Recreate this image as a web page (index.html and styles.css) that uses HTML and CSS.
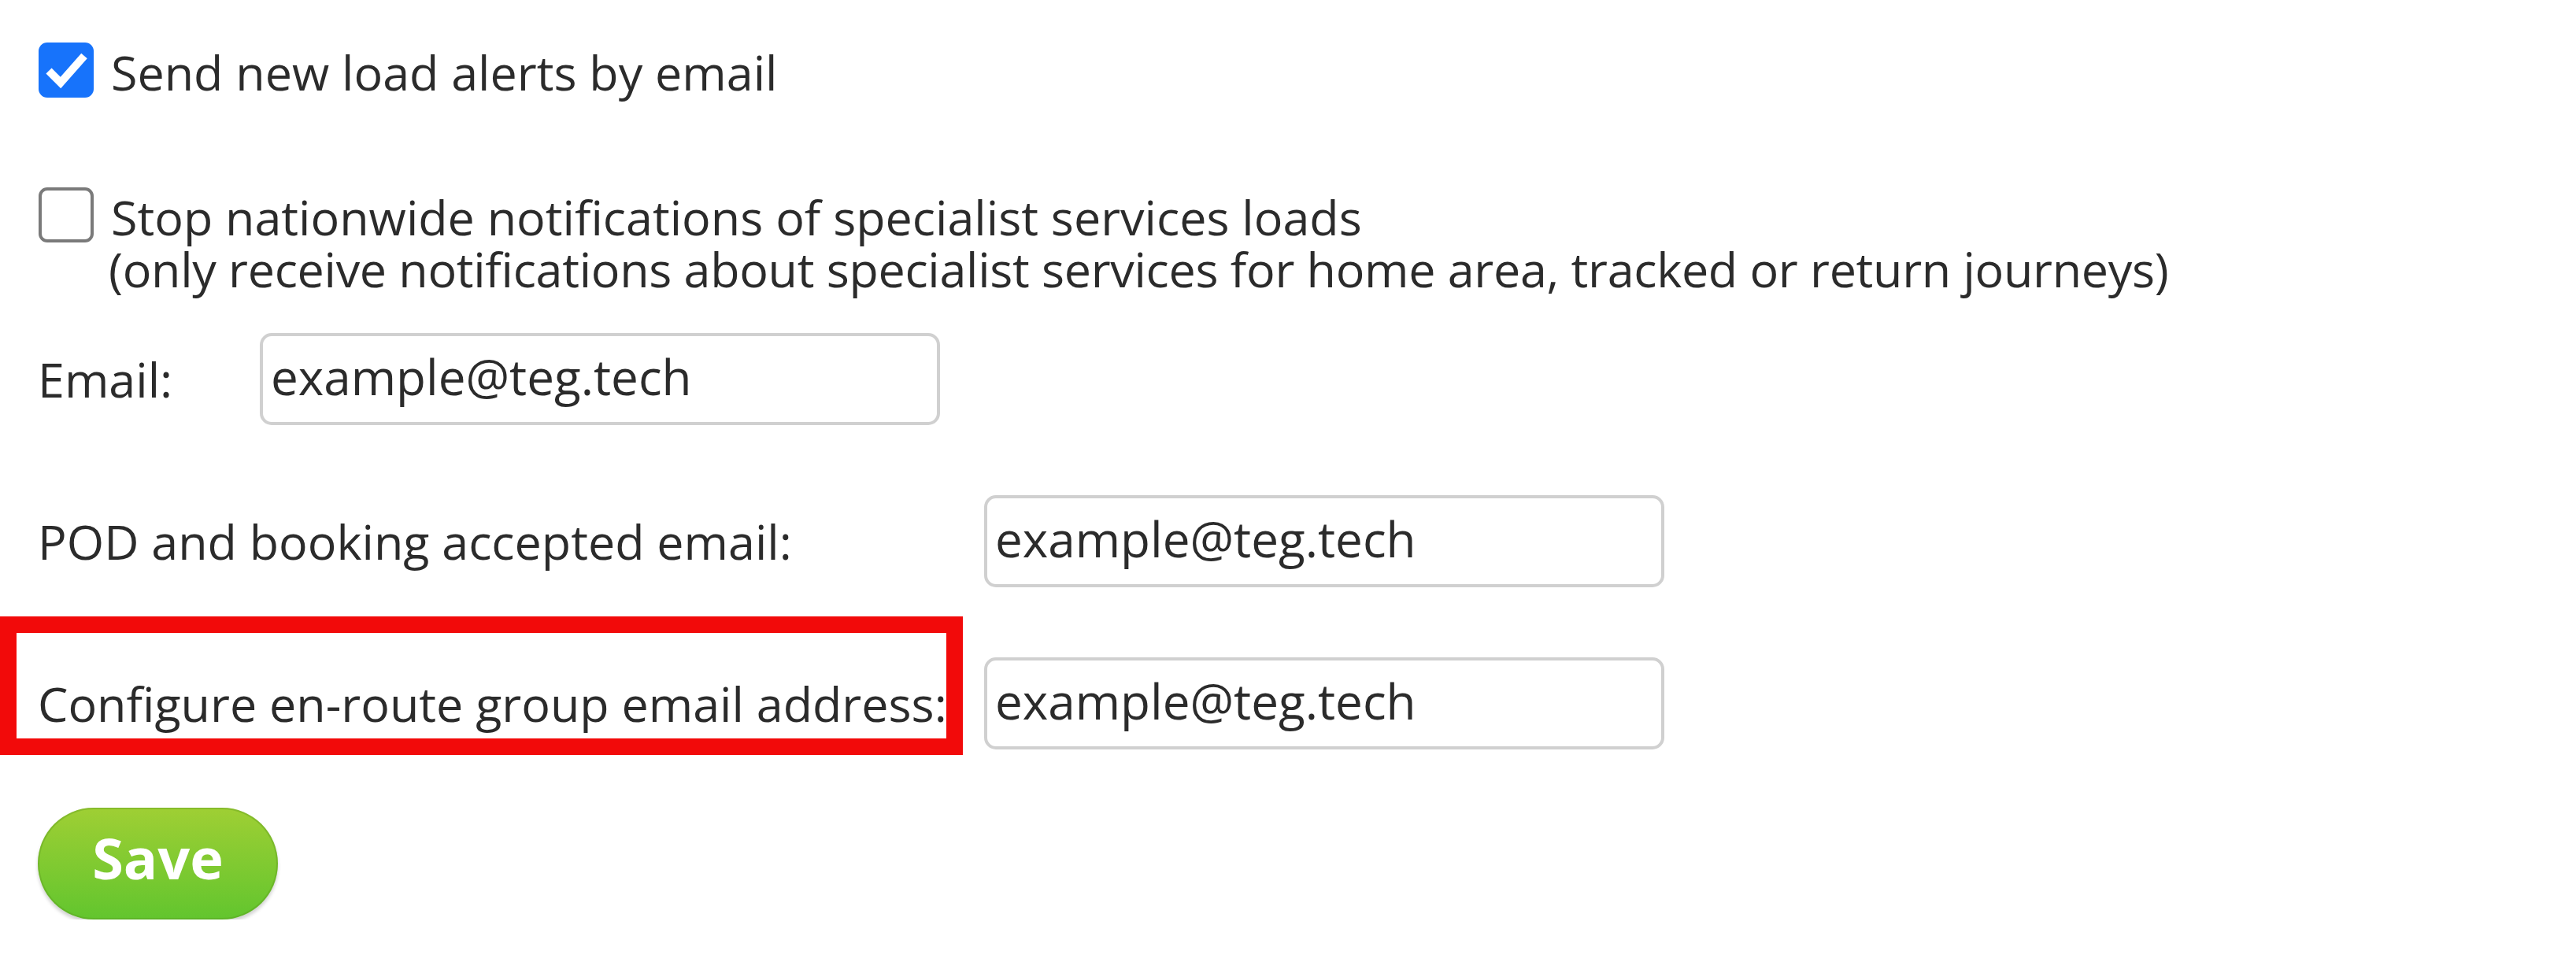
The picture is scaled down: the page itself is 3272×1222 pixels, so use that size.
FILE: index.html
```
<!doctype html>
<html>

<head>
  <meta charset="UTF-8">
  <title>Notification settings</title>
  <link rel="stylesheet" href="styles.css">
</head>

<body>
  <form class="settings">

    <label class="option option-first">
      <span class="box box-checked">
        <svg viewBox="0 0 70 70" width="70" height="70">
          <polyline points="13,36 28,51 58,17" fill="none" stroke="#fff" stroke-width="10" />
        </svg>
      </span>
      <span class="option-text">Send new load alerts by email</span>
    </label>

    <label class="option option-second">
      <span class="box"></span>
      <span class="option-text">
        <span class="option-line">Stop nationwide notifications of specialist services loads</span>
        <span class="option-line option-note">(only receive notifications about specialist services for home
          area, tracked or return journeys)</span>
      </span>
    </label>

    <div class="field">
      <span class="field-label field-label-short">Email:</span>
      <input class="field-input" type="text" value="example@teg.tech">
    </div>

    <div class="field">
      <span class="field-label">POD and booking accepted email:</span>
      <input class="field-input" type="text" value="example@teg.tech">
    </div>

    <div class="field field-last">
      <span class="field-label">Configure en-route group email address:</span>
      <input class="field-input" type="text" value="example@teg.tech">
      <!-- highlight box drawn over the label -->
      <span class="highlight"></span>
    </div>

    <button class="save" type="button">Save</button>

  </form>
</body>

</html>
```
FILE: styles.css
```
body {
  margin: 0;
  padding: 54px 0 0 48px;
  background: #fff;
  color: #2b2b2b;
  font: normal 61px/66px "Open Sans", sans-serif;
}

.settings {
  display: flex;
  flex-direction: column;
  align-items: flex-start;
}

/* checkbox rows */

.option {
  display: flex;
  align-items: flex-start;
  gap: 22px;
}

.option-first {
  margin-bottom: 113px;
}

.option-second {
  margin-bottom: 48px;
}

.option-text {
  margin-top: 5px;
}

.option-line {
  display: block;
  height: 66px;
}

.option-note {
  margin-left: -3px;
  letter-spacing: -0.3px;
}

.box {
  box-sizing: border-box;
  flex: none;
  width: 70px;
  height: 70px;
  margin-left: 1px;
  border: 4px solid #7a7a7a;
  border-radius: 11px;
  background: #fff;
}

.box-checked {
  border: 0;
  background: #1773fb;
}

.box svg {
  display: block;
}

/* email fields */

.field {
  position: relative;
  display: flex;
  align-items: center;
  margin-bottom: 89px;
}

.field-last {
  margin-bottom: 74px;
}

.field-label {
  flex: none;
  width: 1202px;
}

.field-label-short {
  width: 282px;
}

.field-input {
  box-sizing: border-box;
  width: 864px;
  height: 117px;
  margin: 0;
  padding: 0 10px 8px;
  border: 4px solid #d0d0d0;
  border-radius: 15px;
  background: #fff;
  color: #2b2b2b;
  font: normal 62px "Open Sans", sans-serif;
  outline: none;
}

.highlight {
  position: absolute;
  left: -48px;
  top: -52px;
  box-sizing: border-box;
  width: 1223px;
  height: 176px;
  border: 21px solid #f20a0a;
  pointer-events: none;
}

/* save button */

.save {
  display: flex;
  align-items: center;
  justify-content: center;
  width: 305px;
  height: 142px;
  padding: 0 0 16px;
  border: 0;
  border-radius: 71px;
  background: linear-gradient(#9fcf34, #62c52e);
  box-shadow: inset 0 0 0 2px rgba(90, 150, 30, 0.35), 0 4px 4px rgba(0, 0, 0, 0.18);
  color: #fff;
  font: bold 72px/1 "Open Sans", sans-serif;
  cursor: pointer;
}
```
